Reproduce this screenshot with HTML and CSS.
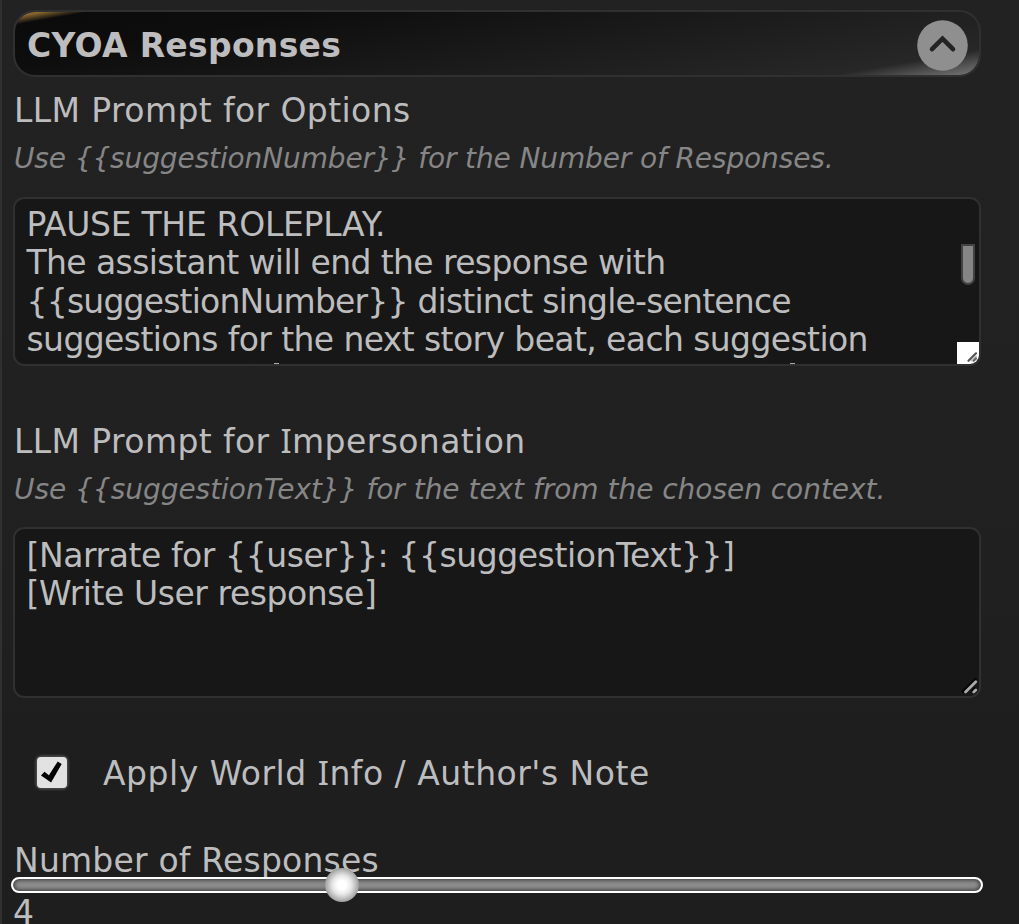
FILE: index.html
```html
<!DOCTYPE html>
<html lang="en">
<head>
<meta charset="utf-8">
<title>CYOA Responses</title>
<link rel="stylesheet" href="styles.css">
</head>
<body>
<main class="panel">
  <header class="drawer-header">
    <h1 class="title">CYOA Responses</h1>
    <svg class="toggle" viewBox="0 0 51 51"><circle cx="25.5" cy="25.5" r="25.3" fill="#8f8f8f"/><path d="M15 29.2 25.5 18.7 36 29.2" fill="none" stroke="#232323" stroke-width="4.6" stroke-linecap="round" stroke-linejoin="miter"/></svg>
  </header>

  <section class="field">
    <label class="label">LLM Prompt for Options</label>
    <small class="hint">Use {{suggestionNumber}} for the Number of Responses.</small>
    <div class="text-box">
      <div class="line caps">PAUSE THE ROLEPLAY.</div>
      <div class="line">The assistant will end the response with</div>
      <div class="line placeholder-line">{{suggestionNumber}} distinct single-sentence</div>
      <div class="line">suggestions for the next story beat, each suggestion</div>
      <span class="overflow-mark first"></span><span class="overflow-mark second"></span>
      <span class="scroll-thumb"></span>
      <svg class="corner" viewBox="0 0 22 22"><path fill="#fff" d="M0 0h22v22H0z"/><path d="M11.5 18.8 19 11.3" stroke="#555" stroke-width="2.2" stroke-linecap="round"/><path d="M14 19 19.5 14" stroke="#bbb" stroke-width="2"/><path d="M16.7 18.8 19 16.5" stroke="#666" stroke-width="2.2" stroke-linecap="round"/></svg>
    </div>
  </section>

  <section class="field second-field">
    <label class="label">LLM Prompt for <span class="slab">I</span>mpersonation</label>
    <small class="hint hint-text">Use {{suggestionText}} for the text from the chosen context.</small>
    <div class="text-box">
      <div class="line bracket-line">[Narrate for {{user}}: {{suggestionText}}]</div>
      <div class="line bracket-line">[Write User response]</div>
      <svg class="corner" viewBox="0 0 22 22"><path d="M6.2 17.6 18.5 5.5" stroke="#050505" stroke-width="3" stroke-linecap="round"/><path d="M15 17.5 18.5 14" stroke="#050505" stroke-width="3"/><path d="M8.5 18 18.8 7.7M16.7 18 18.8 15.9" stroke="#aaa" stroke-width="2.8" stroke-linecap="round"/></svg>
    </div>
  </section>

  <label class="check-row">
    <svg class="checkbox" viewBox="0 0 38 38"><rect x="1" y="1" width="36" height="37" rx="8" fill="#292929"/><rect x="2.5" y="2.5" width="33" height="34" rx="6" fill="#444"/><rect x="4" y="4" width="30" height="31" rx="4" fill="#e2e2e2"/><path d="m8 22.5 3.5-3.8 4.4 3.5 8.8-13.7 4 2.6-10.6 18.4z" fill="#000"/></svg>
    <span class="label check-label">Apply World <span class="slab">I</span>nfo / Author's Note</span>
  </label>

  <section class="range">
    <label class="label range-label">Number of Responses</label>
    <div class="track"><span class="knob"></span></div>
    <div class="value">4</div>
  </section>
</main>
</body>
</html>
```
FILE: styles.css
```css
* { box-sizing: border-box; }
body { margin: 0; background: #1e1e1e; overflow: hidden; }
.panel {
  height: 924px;
  padding: 10px 38px 0 11px;
  border-left: 2px solid #303030;
  overflow: hidden;
  background: linear-gradient(#222 0%, #212121 45%, #202020 65%, #1e1e1e 78%);
  color: #bdbdbd;
  font: 33px/40px "DejaVu Sans", sans-serif;
}
.drawer-header {
  display: flex;
  align-items: center;
  justify-content: space-between;
  height: 67px;
  padding: 0 11px 0 12px;
  border: 2px solid #303030;
  border-radius: 22px;
  background: linear-gradient(170deg, #a07838 0%, #8a682f 2%, #0b0b0b 5.5%, #0d0d0d 22%, #1c1c1c 60%, #272727 89%, #555 95%, #777 100%) padding-box;
}
.title { margin: 4px 0 0; font-size: 33px; line-height: 40px; letter-spacing: .3px; }
.toggle { width: 51px; height: 51px; margin-top: 3px; }
.field { display: flex; flex-direction: column; padding-top: 14px; }
.second-field { padding-top: 56px; }
.label { display: block; letter-spacing: .4px; white-space: nowrap; }
.field .label, .range-label, .hint { margin-left: 1px; }
.slab { font-family: "Noto Sans", sans-serif; line-height: 1; }
.hint {
  display: block;
  height: 34px;
  margin-top: 11px;
  margin-bottom: 21px;
  color: #868686;
  font-size: 28px;
  line-height: 34px;
  font-style: italic;
  letter-spacing: -.12px;
  white-space: nowrap;
}
.hint-text { margin-bottom: 20px; letter-spacing: -.03px; }
.text-box {
  position: relative;
  height: 169px;
  padding: 7px 11.5px;
  overflow: hidden;
  border: 2px solid #303030;
  border-radius: 11px;
  background: #171717;
}
.second-field .text-box { height: 171px; padding-top: 8px; }
.line { height: 38.4px; line-height: 38.4px; letter-spacing: -.6px; white-space: nowrap; }
.caps { letter-spacing: -.3px; }
.placeholder-line { letter-spacing: -.8px; }
.bracket-line { letter-spacing: -.43px; }
.scroll-thumb {
  position: absolute;
  top: 45px;
  right: 4px;
  width: 14px;
  height: 41px;
  border: 2px solid #424242;
  border-radius: 0 0 7px 7px;
  background: #858585;
}
.overflow-mark { position: absolute; bottom: 0; width: 5px; height: 1px; background: #aaa; }
.first { left: 259px; }
.second { left: 775px; }
.corner { position: absolute; right: 0; bottom: 0; width: 22px; height: 22px; }
.check-row { display: flex; align-items: center; height: 40px; margin-top: 56px; padding-left: 20px; }
.checkbox { width: 38px; height: 38px; margin-top: -5px; }
.check-label { margin-left: 32px; letter-spacing: .5px; }
.range { padding-top: 47px; }
.range-label { letter-spacing: .2px; }
.track {
  position: relative;
  height: 16px;
  margin: -4px -2px 0;
  border: 2px solid #fff;
  border-radius: 8px;
  background: #8d8d8d;
  box-shadow: inset 0 0 4px 1px #333;
}
.knob {
  position: absolute;
  left: 312px;
  top: -11px;
  width: 34px;
  height: 34px;
  border-radius: 50%;
  background: radial-gradient(circle, #fff 0 18%, #e6e6e6 40%, #aaa 66%, #999 72%);
}
.value { line-height: 40px; }
```
